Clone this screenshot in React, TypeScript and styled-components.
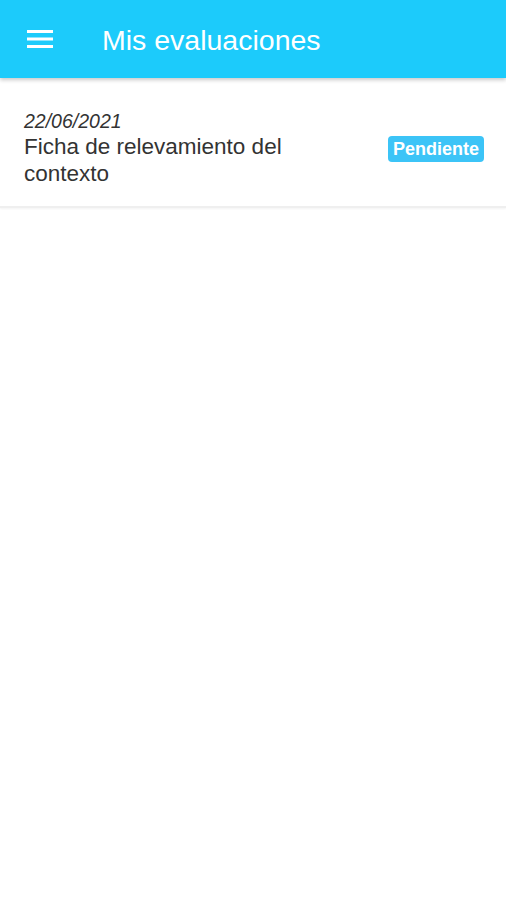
import React from 'react';
import styled, { createGlobalStyle } from 'styled-components';

const GlobalStyle = createGlobalStyle`
  body {
    margin: 0;
    background: #ffffff;
    font-family: "Liberation Sans", Arial, sans-serif;
  }
`;

const Page = styled.div`
  width: 506px;
  min-height: 900px;
  background: #fff;
`;

const Toolbar = styled.header`
  height: 78px;
  background: #1ccbfb;
  display: flex;
  align-items: center;
  padding: 0 26px;
  box-shadow: 0 2px 4px rgba(0, 0, 0, 0.22);
  position: relative;
  z-index: 1;
`;

const MenuButton = styled.button`
  border: none;
  background: none;
  padding: 0;
  width: 28px;
  height: 28px;
  display: flex;
  align-items: center;
  justify-content: center;
  margin-right: 48px;
`;

const Title = styled.h1`
  margin: 2px 0 0;
  font-family: "Liberation Sans", Arial, sans-serif;
  font-size: 28.5px;
  font-weight: 400;
  color: #fff;
`;

const List = styled.div`
  display: flex;
  flex-direction: column;
`;

const Item = styled.div`
  display: flex;
  align-items: center;
  justify-content: space-between;
  padding: 31px 22px 19px 24px;
  border-bottom: 2px solid #efefef;
  box-shadow: 0 1px 2px rgba(0, 0, 0, 0.05);
`;

const Info = styled.div`
  display: flex;
  flex-direction: column;
`;

const DateText = styled.span`
  font-family: "Liberation Sans", Arial, sans-serif;
  font-size: 19.5px;
  font-style: italic;
  color: #333;
  line-height: 24px;
`;

const ItemTitle = styled.span`
  font-family: "Liberation Sans", Arial, sans-serif;
  font-size: 22.5px;
  color: #333;
  line-height: 27px;
  max-width: 320px;
`;

const Badge = styled.span<{ $color: string }>`
  font-family: "Liberation Sans", Arial, sans-serif;
  background: ${p => p.$color};
  color: #fff;
  font-weight: 700;
  font-size: 18px;
  line-height: 20px;
  padding: 3px 5px;
  border-radius: 4px;
  margin-top: 1px;
`;

const evaluaciones = [
  { fecha: '22/06/2021', titulo: 'Ficha de relevamiento del contexto', estado: 'Pendiente' },
];

const App: React.FC = () => {
  return (
    <Page>
      <GlobalStyle />
      <Toolbar>
        <MenuButton>
          <svg width="28" height="20" viewBox="0 0 28 20">
            <rect x="1" y="1" width="26" height="3" fill="#fff" />
            <rect x="1" y="8.5" width="26" height="3" fill="#fff" />
            <rect x="1" y="16" width="26" height="3" fill="#fff" />
          </svg>
        </MenuButton>
        <Title>Mis evaluaciones</Title>
      </Toolbar>
      <List>
        {evaluaciones.map((ev, i) => (
          <Item key={i}>
            <Info>
              <DateText>{ev.fecha}</DateText>
              <ItemTitle>{ev.titulo}</ItemTitle>
            </Info>
            <Badge $color="#3cc4f7">{ev.estado}</Badge>
          </Item>
        ))}
      </List>
    </Page>
  );
};

export default App;
